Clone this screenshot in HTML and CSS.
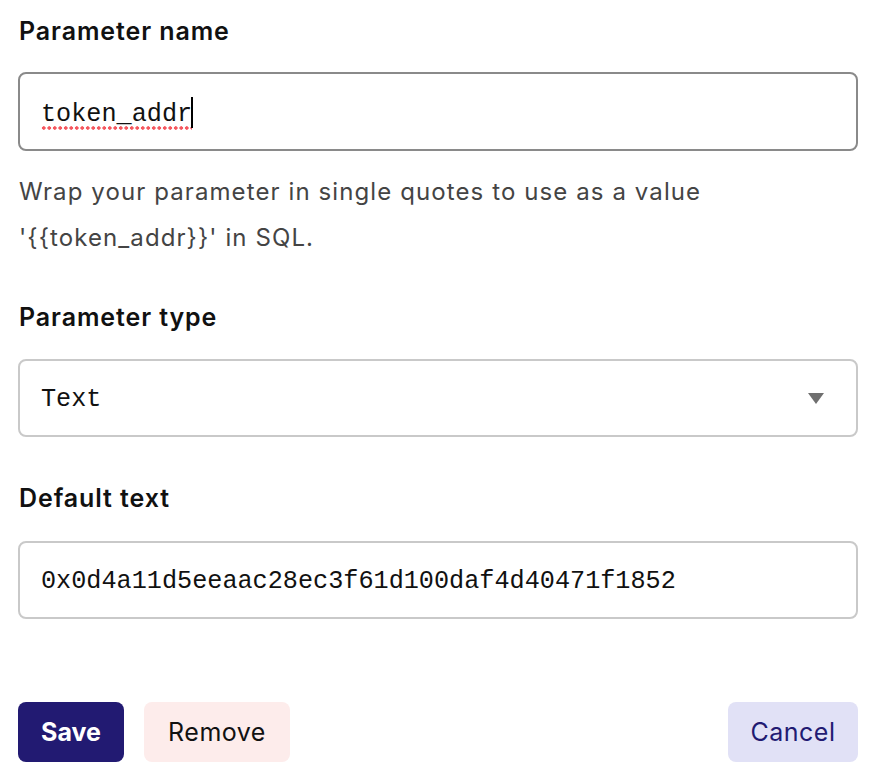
FILE: index.html
```html
<!DOCTYPE html>
<html>
<head>
<meta charset="utf-8">
<link rel="stylesheet" href="styles.css">
</head>
<body>
<form class="form">
  <div class="label label-first">Parameter name</div>
  <div class="field field-active"><span class="misspelled">token_addr</span><span class="caret"></span></div>
  <p class="help">Wrap your parameter in single quotes to use as a value<br>'{{token_addr}}' in SQL.</p>

  <div class="label label-second">Parameter type</div>
  <div class="field select"><span>Text</span>
    <svg class="arrow" width="16" height="11" viewBox="0 0 16 11"><path d="M0 0H16L8 11Z" fill="#6f6f6f"/></svg>
  </div>

  <div class="label label-third">Default text</div>
  <div class="field">0x0d4a11d5eeaac28ec3f61d100daf4d40471f1852</div>

  <div class="actions">
    <button type="button" class="btn btn-save">Save</button>
    <button type="button" class="btn btn-remove">Remove</button>
    <span class="spacer"></span>
    <button type="button" class="btn btn-cancel">Cancel</button>
  </div>
</form>
</body>
</html>
```
FILE: styles.css
```css
html, body {
  margin: 0;
  padding: 0;
  background: #ffffff;
}
body {
  font-family: "Inter", "Noto Sans", "Liberation Sans", sans-serif;
  color: #111;
}
.form {
  padding: 0 16px 0 18px;
  display: flex;
  flex-direction: column;
}
.label {
  font-size: 25px;
  font-weight: 600;
  line-height: 36px;
  color: #111;
  letter-spacing: 0.9px;
  padding-left: 1px;
}
.label-first { margin-top: 13px; margin-bottom: 23px; }
.label-second { margin-top: 38px; margin-bottom: 24px; }
.label-third { margin-top: 43px; margin-bottom: 25px; }
.field {
  box-sizing: border-box;
  height: 78px;
  border: 2px solid #c9c9c9;
  border-radius: 8px;
  padding: 3px 21px 0;
  display: flex;
  align-items: center;
  font-family: "Liberation Mono", "DejaVu Sans Mono", monospace;
  font-size: 25.2px;
  color: #111;
}
.field-active {
  height: 79px;
  border-color: #8a8a8a;
  padding-top: 6px;
}
.misspelled {
  display: inline-block;
  line-height: 30px;
  padding-bottom: 0;
  background-image: radial-gradient(circle, #f5585f 1.5px, transparent 2px);
  background-size: 5.5px 4px;
  background-repeat: repeat-x;
  background-position: 0 100%;
}
.caret {
  display: inline-block;
  width: 2px;
  height: 31px;
  background: #000;
  margin-left: -1px;
  margin-top: -4px;
}
.select {
  justify-content: space-between;
  padding-right: 32px;
}
.arrow { display: block; margin-top: -3px; }
.help {
  margin: 18px 0 0;
  font-size: 24px;
  line-height: 46px;
  color: #444;
  letter-spacing: 1.1px;
  padding-left: 1px;
}
.actions {
  margin-top: 83px;
  display: flex;
  gap: 20px;
}
.spacer { flex: 1; }
.btn {
  height: 60px;
  border: none;
  border-radius: 8px;
  font-family: "Inter", "Noto Sans", "Liberation Sans", sans-serif;
  font-size: 25px;
  letter-spacing: 0.5px;
  padding: 0;
  cursor: pointer;
}
.btn-save {
  background: #221a72;
  color: #fff;
  font-weight: 700;
  width: 106px;
  letter-spacing: 0;
}
.btn-remove {
  background: #fdeceb;
  color: #111;
  width: 146px;
}
.btn-cancel {
  background: #e1e1f6;
  color: #221a72;
  width: 130px;
}
```
